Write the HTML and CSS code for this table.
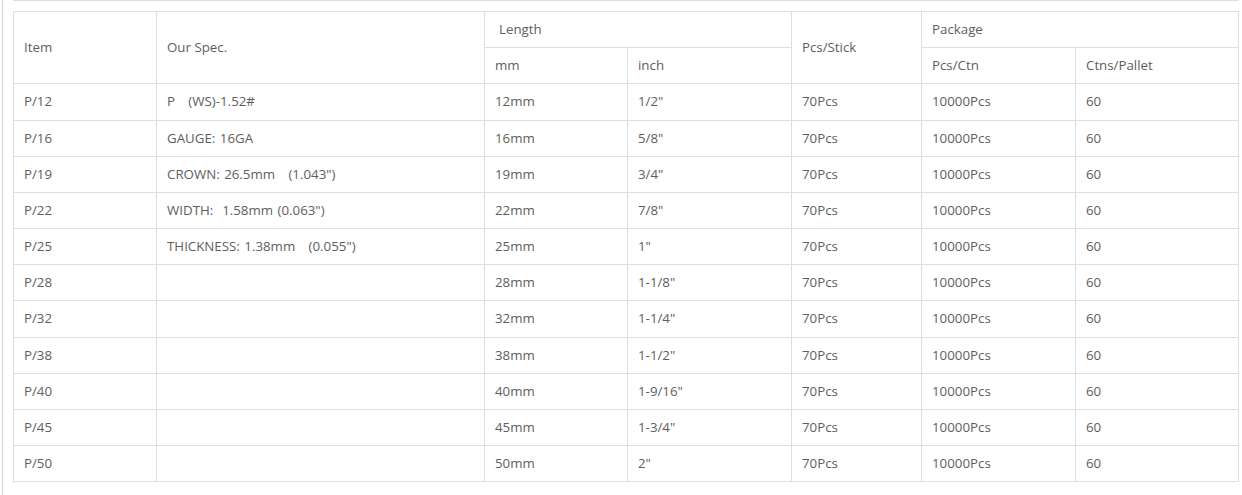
FILE: index.html
```html
<!DOCTYPE html>
<html>
<head>
<meta charset="utf-8">
<link rel="stylesheet" href="styles.css">
</head>
<body>
<div class="wrap">
  <div class="rule"></div>
  <table class="spec">
    <colgroup>
      <col class="c1"><col class="c2"><col class="c3"><col class="c4"><col class="c5"><col class="c6"><col class="c7">
    </colgroup>
    <tbody>
      <tr>
        <td rowspan="2">Item</td>
        <td rowspan="2">Our Spec.</td>
        <td colspan="2" class="indent">Length</td>
        <td rowspan="2">Pcs/Stick</td>
        <td colspan="2">Package</td>
      </tr>
      <tr>
        <td>mm</td><td>inch</td><td>Pcs/Ctn</td><td>Ctns/Pallet</td>
      </tr>
      <tr><td>P/12</td><td class="pre">P   (WS)-1.52#</td><td>12mm</td><td>1/2"</td><td>70Pcs</td><td>10000Pcs</td><td>60</td></tr>
      <tr><td>P/16</td><td class="pre">GAUGE: 16GA</td><td>16mm</td><td>5/8"</td><td>70Pcs</td><td>10000Pcs</td><td>60</td></tr>
      <tr><td>P/19</td><td class="pre">CROWN: 26.5mm   (1.043")</td><td>19mm</td><td>3/4"</td><td>70Pcs</td><td>10000Pcs</td><td>60</td></tr>
      <tr><td>P/22</td><td class="pre">WIDTH:  1.58mm (0.063")</td><td>22mm</td><td>7/8"</td><td>70Pcs</td><td>10000Pcs</td><td>60</td></tr>
      <tr><td>P/25</td><td class="pre">THICKNESS: 1.38mm   (0.055")</td><td>25mm</td><td>1"</td><td>70Pcs</td><td>10000Pcs</td><td>60</td></tr>
      <tr><td>P/28</td><td></td><td>28mm</td><td>1-1/8"</td><td>70Pcs</td><td>10000Pcs</td><td>60</td></tr>
      <tr><td>P/32</td><td></td><td>32mm</td><td>1-1/4"</td><td>70Pcs</td><td>10000Pcs</td><td>60</td></tr>
      <tr><td>P/38</td><td></td><td>38mm</td><td>1-1/2"</td><td>70Pcs</td><td>10000Pcs</td><td>60</td></tr>
      <tr><td>P/40</td><td></td><td>40mm</td><td>1-9/16"</td><td>70Pcs</td><td>10000Pcs</td><td>60</td></tr>
      <tr><td>P/45</td><td></td><td>45mm</td><td>1-3/4"</td><td>70Pcs</td><td>10000Pcs</td><td>60</td></tr>
      <tr><td>P/50</td><td></td><td>50mm</td><td>2"</td><td>70Pcs</td><td>10000Pcs</td><td>60</td></tr>
    </tbody>
  </table>
</div>
</body>
</html>
```
FILE: styles.css
```css
html, body {
  margin: 0;
  padding: 0;
  background: #fff;
}
body {
  font-family: "Open Sans", "Liberation Sans", sans-serif;
  font-size: 13.3px;
  color: #5e5e5e;
}
.wrap {
  margin-left: 2px;
  border-left: 1px solid #d4d4d4;
  padding-left: 10px;
  width: 1226px;
  min-height: 495px;
}
.rule {
  border-top: 1px solid #dedede;
  margin-bottom: 10px;
}
.spec {
  border-collapse: collapse;
  table-layout: fixed;
  width: 1226px;
}
.c1 { width: 143px; }
.c2 { width: 328px; }
.c3 { width: 143px; }
.c4 { width: 164px; }
.c5 { width: 130px; }
.c6 { width: 154px; }
.c7 { width: 163px; }
.spec td {
  border: 1px solid #dedede;
  padding: 8px 10px;
  line-height: 19.17px;
  vertical-align: middle;
  text-align: left;
}
.spec td.indent {
  padding-left: 14px;
}
.spec td.pre {
  white-space: pre;
  word-spacing: 1px;
}
```
